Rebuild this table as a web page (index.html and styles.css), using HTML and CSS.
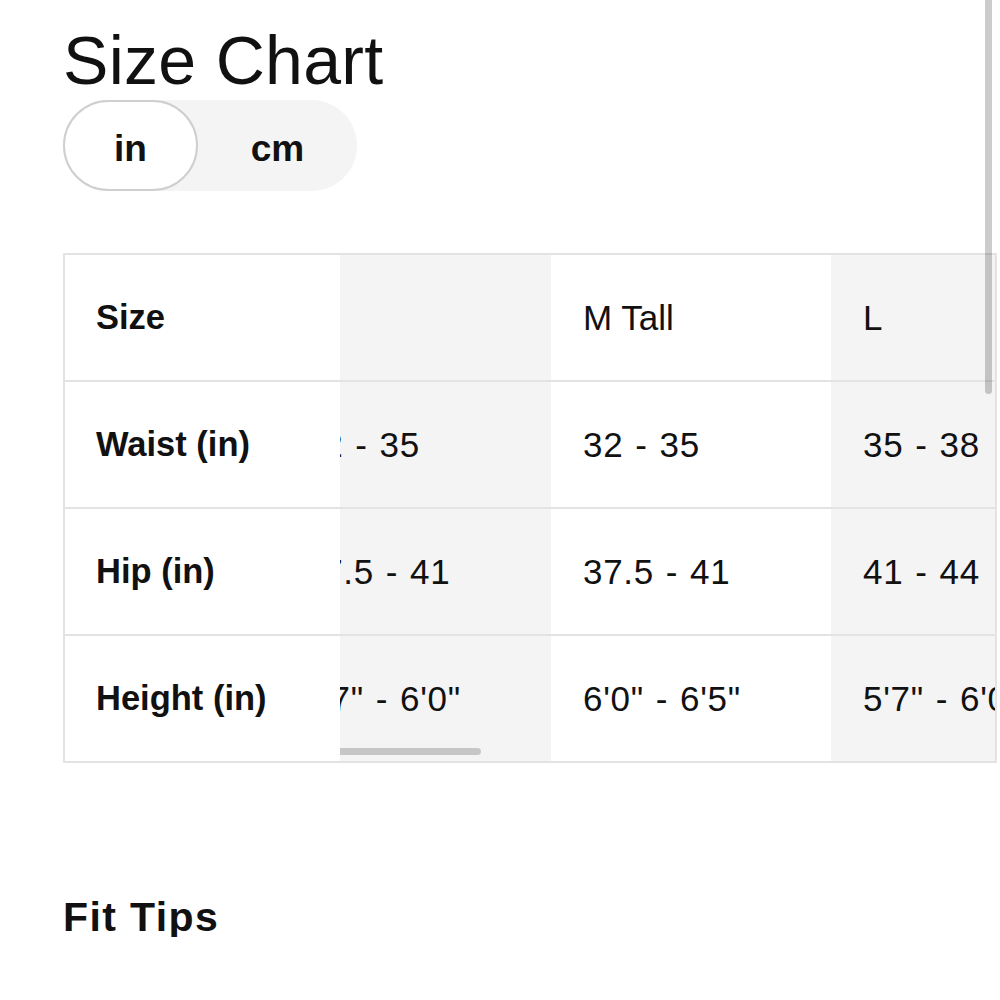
FILE: index.html
```html
<!DOCTYPE html>
<html lang="en">
<head>
<meta charset="utf-8">
<title>Size Chart</title>
<link rel="stylesheet" href="styles.css">
</head>
<body>
<div class="page">
  <h1 class="title">Size Chart</h1>
  <div class="toggle">
    <button class="toggle-btn is-active">in</button>
    <button class="toggle-btn">cm</button>
  </div>

  <div class="chart">
    <div class="labels">
      <div class="cell label">Size</div>
      <div class="cell label">Waist (in)</div>
      <div class="cell label">Hip (in)</div>
      <div class="cell label">Height (in)</div>
    </div>
    <div class="scroller">
      <div class="track">
        <div class="col alt">
          <div class="cell head">M</div>
          <div class="cell val">32 - 35</div>
          <div class="cell val">37.5 - 41</div>
          <div class="cell val">5'7" - 6'0"</div>
        </div>
        <div class="col">
          <div class="cell head">M Tall</div>
          <div class="cell val">32 - 35</div>
          <div class="cell val">37.5 - 41</div>
          <div class="cell val">6'0" - 6'5"</div>
        </div>
        <div class="col alt">
          <div class="cell head">L</div>
          <div class="cell val">35 - 38</div>
          <div class="cell val">41 - 44</div>
          <div class="cell val">5'7" - 6'0"</div>
        </div>
      </div>
      <div class="hthumb"></div>
    </div>
  </div>

  <h2 class="subtitle">Fit Tips</h2>
</div>
<div class="vthumb"></div>
</body>
</html>
```

FILE: styles.css
```css
* { box-sizing: border-box; }

html, body {
  margin: 0;
  padding: 0;
  background: #ffffff;
  color: #111111;
  font-family: "Liberation Sans", Arial, sans-serif;
  overflow: hidden;
}

.page {
  width: 1000px;
  padding: 26px 3px 0 63px;
}

.title {
  margin: 0;
  font-size: 68px;
  line-height: 68px;
  font-weight: 400;
  letter-spacing: 0.3px;
}

.toggle {
  margin-top: 6px;
  width: 294px;
  height: 91px;
  border-radius: 46px;
  background: #f4f4f4;
  display: flex;
}

.toggle-btn {
  width: 147px;
  height: 91px;
  border: 2px solid transparent;
  border-radius: 46px;
  background: transparent;
  font-family: "Liberation Sans", Arial, sans-serif;
  font-size: 37px;
  font-weight: 700;
  color: #111111;
  padding: 6px 0 0;
  display: flex;
  align-items: center;
  justify-content: center;
}

.toggle-btn.is-active {
  width: 135px;
  background: #ffffff;
  border-color: #cfcfcf;
}

.toggle-btn + .toggle-btn {
  flex: 1;
}

.chart {
  margin-top: 62px;
  width: 934px;
  border: 2px solid #e3e3e3;
  display: flex;
  overflow: hidden;
}

.labels {
  width: 275px;
  flex: none;
  background: #ffffff;
  position: relative;
  z-index: 1;
}

.scroller {
  flex: 1;
  overflow: hidden;
  position: relative;
}

.track {
  display: flex;
  margin-left: -69px;
}

.col {
  width: 280px;
  flex: none;
  background: #ffffff;
}

.col.alt {
  background: #f4f4f4;
}

.cell {
  height: 127px;
  border-bottom: 2px solid #e3e3e3;
  display: flex;
  align-items: center;
  padding-left: 32px;
  white-space: nowrap;
}

.cell:last-child {
  height: 125px;
  border-bottom: 0;
}

.label {
  padding-left: 31px;
  font-size: 34.5px;
  font-weight: 700;
}

.head {
  font-size: 35px;
}

.val {
  font-size: 35px;
  letter-spacing: 0.7px;
  word-spacing: 1.5px;
}

.hthumb {
  position: absolute;
  left: -20px;
  bottom: 6px;
  width: 161px;
  height: 7px;
  border-radius: 4px;
  background: #c6c6c6;
}

.subtitle {
  margin: 134px 0 0;
  font-size: 41px;
  line-height: 40px;
  font-weight: 700;
  letter-spacing: 1.4px;
}

.vthumb {
  position: fixed;
  top: -6px;
  left: 985px;
  width: 7px;
  height: 400px;
  border-radius: 4px;
  background: rgba(0, 0, 0, 0.2);
}
```
